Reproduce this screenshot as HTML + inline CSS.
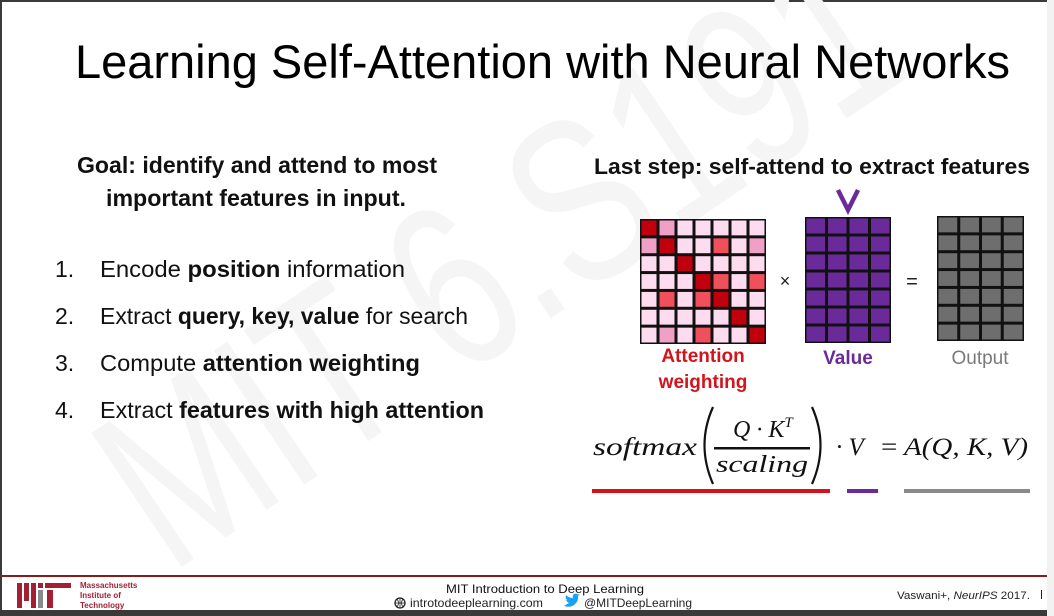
<!DOCTYPE html>
<html><head><meta charset="utf-8"><style>
html,body{margin:0;padding:0;background:#fff;}
svg{display:block;}
text{font-family:"Liberation Sans",sans-serif;}
.serif{font-family:"Liberation Serif",serif;font-style:italic;}
</style></head><body>
<svg width="1054" height="616" viewBox="0 0 1054 616" xmlns="http://www.w3.org/2000/svg">
<rect width="1054" height="616" fill="#fff"/>
<rect x="1047" y="0" width="7" height="616" fill="#f2f2f2"/>
<rect x="0" y="0" width="1047" height="2" fill="#3a3a3a"/>
<rect x="0" y="0" width="2" height="616" fill="#3a3a3a"/>
<!-- watermark -->
<text x="170" y="575" font-size="235" fill="#f5f5f5" transform="rotate(-34 170 575)" textLength="900" lengthAdjust="spacingAndGlyphs">MIT 6.S191</text>
<!-- title -->
<text x="75" y="78" font-size="47" fill="#000" textLength="935" lengthAdjust="spacingAndGlyphs">Learning Self-Attention with Neural Networks</text>
<!-- left -->
<g font-size="23" fill="#111">
<text x="77" y="173" font-weight="bold" textLength="360" lengthAdjust="spacingAndGlyphs">Goal: identify and attend to most</text>
<text x="106" y="206" font-weight="bold" textLength="300" lengthAdjust="spacingAndGlyphs">important features in input.</text>
<text x="55" y="277">1.</text>
<text x="100" y="277" textLength="305" lengthAdjust="spacingAndGlyphs">Encode <tspan font-weight="bold">position</tspan> information</text>
<text x="55" y="324">2.</text>
<text x="100" y="324" textLength="368" lengthAdjust="spacingAndGlyphs">Extract <tspan font-weight="bold">query, key, value</tspan> for search</text>
<text x="55" y="371">3.</text>
<text x="100" y="371" textLength="320" lengthAdjust="spacingAndGlyphs">Compute <tspan font-weight="bold">attention weighting</tspan></text>
<text x="55" y="418">4.</text>
<text x="100" y="418" textLength="384" lengthAdjust="spacingAndGlyphs">Extract <tspan font-weight="bold">features with high attention</tspan></text>
</g>
<!-- right -->
<text x="594" y="174" font-size="22" font-weight="bold" fill="#111" textLength="436" lengthAdjust="spacingAndGlyphs">Last step: self-attend to extract features</text>
<path d="M838 190 L848 210 L858 190" stroke="#6a2a9a" stroke-width="4.5" fill="none"/>
<rect x="640" y="219" width="126" height="125" fill="#111"/>
<g id="cells"></g>
<rect x="805" y="217" width="86" height="126" fill="#111"/>
<g id="vcells"></g>
<rect x="937" y="216" width="87" height="125" fill="#111"/>
<g id="ocells"></g>
<text x="785" y="287" font-size="18" fill="#222" text-anchor="middle">×</text>
<text x="912" y="288" font-size="20" fill="#222" text-anchor="middle">=</text>
<g font-size="19" font-weight="bold" text-anchor="middle">
<text x="703" y="362" fill="#d4141c">Attention</text>
<text x="703" y="388" fill="#d4141c">weighting</text>
<text x="848" y="364" fill="#6a2a9a">Value</text>
<text x="980" y="364" fill="#7a7a7a" font-weight="normal">Output</text>
</g>
<!-- formula -->
<text class="serif" x="593" y="455" font-size="25" fill="#111" textLength="104" lengthAdjust="spacingAndGlyphs">softmax</text>
<path d="M713 407 Q696 445 713 484" stroke="#111" stroke-width="2.2" fill="none"/>
<path d="M812 407 Q829 445 812 484" stroke="#111" stroke-width="2.2" fill="none"/>
<text class="serif" x="733" y="437" font-size="24" fill="#111">Q · K<tspan font-size="15" dy="-10">T</tspan></text>
<rect x="714" y="447" width="96" height="2.5" fill="#111"/>
<text class="serif" x="716" y="472" font-size="24" fill="#111" textLength="92" lengthAdjust="spacingAndGlyphs">scaling</text>
<text class="serif" x="836" y="455" font-size="25" fill="#111">· V</text>
<text class="serif" x="881" y="455" font-size="25" fill="#111" textLength="147" lengthAdjust="spacingAndGlyphs"><tspan font-style="normal">=</tspan> A(Q, K, V)</text>
<rect x="592" y="489" width="238" height="4" fill="#d4141c"/>
<rect x="847" y="489" width="31" height="4" fill="#6a2a9a"/>
<rect x="904" y="489" width="126" height="4" fill="#8a8a8a"/>
<!-- footer -->
<rect x="2" y="575" width="1045" height="2" fill="#8a1b1b"/>
<g fill="#a31f34">
<rect x="17" y="583" width="5" height="25"/>
<rect x="24" y="583" width="5" height="18"/>
<rect x="31" y="583" width="5" height="25"/>
<rect x="38" y="583" width="5" height="5"/>
<rect x="45" y="583" width="26" height="5"/>
<rect x="47" y="590" width="6" height="18"/>
</g>
<rect x="38" y="590" width="5" height="18" fill="#8a8b8c"/>
<g font-size="8" font-weight="bold" fill="#a31f34">
<text x="80" y="588">Massachusetts</text>
<text x="80" y="598">Institute of</text>
<text x="80" y="608">Technology</text>
</g>
<text x="545" y="593" font-size="12" fill="#111" text-anchor="middle" textLength="198" lengthAdjust="spacingAndGlyphs">MIT Introduction to Deep Learning</text>
<circle cx="400" cy="603" r="5" fill="none" stroke="#222" stroke-width="1.3"/>
<path d="M395 603h10M400 598v10M397 599q3 4 0 8M403 599q-3 4 0 8" stroke="#222" stroke-width="0.8" fill="none"/>
<text x="410" y="607" font-size="12" fill="#222" textLength="133" lengthAdjust="spacingAndGlyphs">introtodeeplearning.com</text>
<path d="M564 606 Q570 608 574 605 Q579 601 578 596 L580 594 L578 594.5 Q576 593 574 594 Q572 595.5 573 598 Q569 598 566 595 Q565 598 567 600 L566 600 Q567 602 569 603 Q567 604 564 606 Z" fill="#1da1f2"/>
<text x="584" y="607" font-size="12" fill="#222" textLength="108" lengthAdjust="spacingAndGlyphs">@MITDeepLearning</text>
<text x="897" y="599" font-size="11" fill="#222" textLength="133" lengthAdjust="spacingAndGlyphs">Vaswani+, <tspan font-style="italic">NeurIPS</tspan> 2017.</text>
<rect x="1041" y="590" width="1" height="9" fill="#222"/>
<rect x="0" y="610" width="1047" height="6" fill="#3a3a3a"/>
</svg>
<script>
(function(){
var ns="http://www.w3.org/2000/svg";
var C={D:"#c0000c",P:"#f0a0c4",L:"#fcdcee",R:"#f0505c"};
var m=["DPLLLLL","PDLLRLP","LLDLLLL","LLLDRLR","LRLRDLL","LLLLLDL","LPLRLLD"];
var g=document.getElementById("cells");
var cw=126/7,ch=125/7;
for(var r=0;r<7;r++)for(var c=0;c<7;c++){var e=document.createElementNS(ns,"rect");e.setAttribute("x",640+c*cw+1.5);e.setAttribute("y",219+r*ch+1.5);e.setAttribute("width",cw-3);e.setAttribute("height",ch-3);e.setAttribute("fill",C[m[r][c]]);g.appendChild(e);}
function grid(id,x,y,w,h,col){var g=document.getElementById(id);var cw=w/4,ch=h/7;for(var r=0;r<7;r++)for(var c=0;c<4;c++){var e=document.createElementNS(ns,"rect");e.setAttribute("x",x+c*cw+1.5);e.setAttribute("y",y+r*ch+1.5);e.setAttribute("width",cw-3);e.setAttribute("height",ch-3);e.setAttribute("fill",col);g.appendChild(e);}}
grid("vcells",805,217,86,126,"#6a2a9a");
grid("ocells",937,216,87,125,"#6e6e6e");
})();
</script>
</body></html>
